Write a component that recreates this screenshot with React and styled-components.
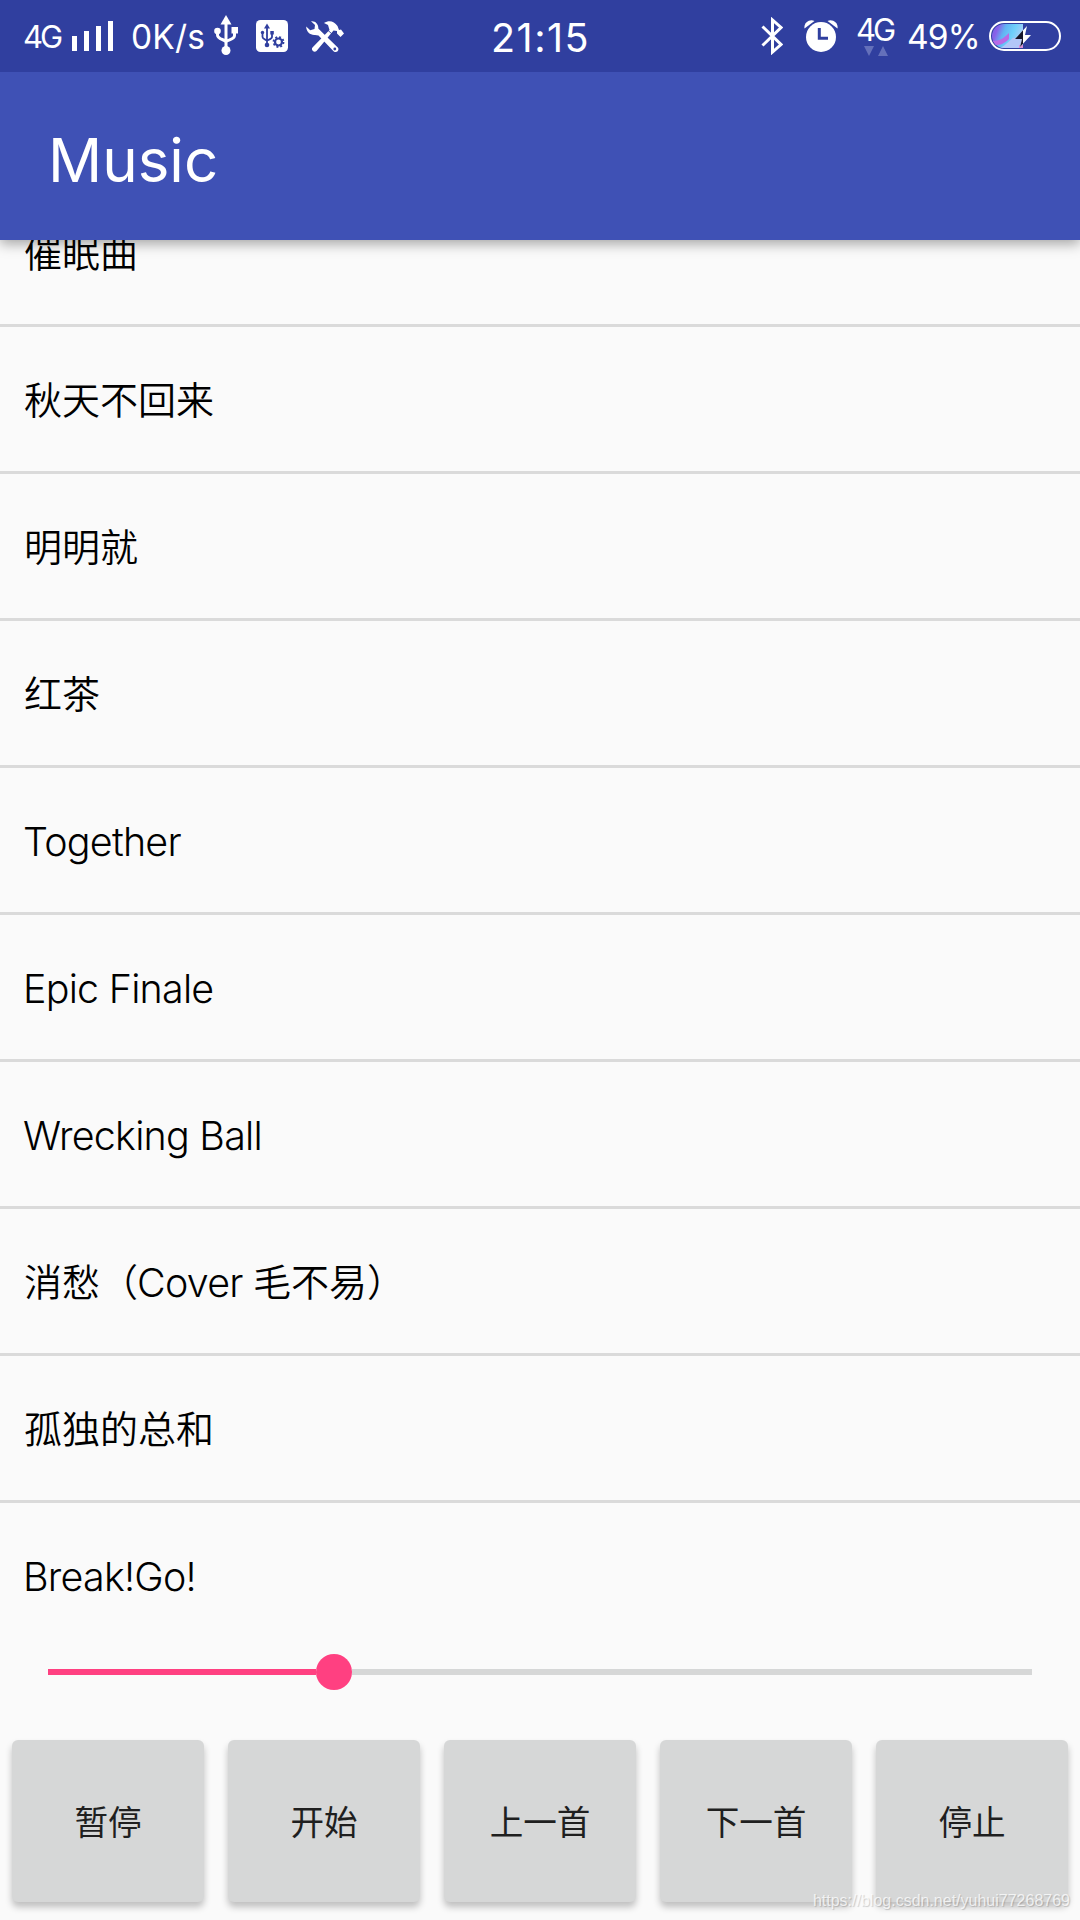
import React from 'react';
import styled, { createGlobalStyle } from 'styled-components';

const songs = [
  '催眠曲',
  '秋天不回来',
  '明明就',
  '红茶',
  'Together',
  'Epic Finale',
  'Wrecking Ball',
  '消愁（Cover 毛不易）',
  '孤独的总和',
  'Break!Go!',
];

const controls = ['暂停', '开始', '上一首', '下一首', '停止'];

const isLatin = (text) => /^[\x20-\x7e]+$/.test(text);

const SignalIcon = () => (
  <svg width="42" height="30" viewBox="0 0 42 30" fill="#fff">
    <path d="M0 15h5v15H0zM12 10h5v20h-5zM24 5h5v25h-5zM36 0h5v30h-5z" />
  </svg>
);

const UsbIcon = () => (
  <svg width="24" height="40" viewBox="0 0 24 40" fill="#fff">
    <path d="M12 0l5.5 9.5h-11z" />
    <circle cx="12" cy="35.5" r="4.5" />
    <circle cx="3.5" cy="16" r="3.3" />
    <path d="M17.5 12H24v6.5h-6.5z" />
    <path
      d="M12 8v25M3.5 16v4c0 5 8.5 4 8.5 7.5M20.5 17v3.5c0 4.5-8.5 4-8.5 7"
      fill="none"
      stroke="#fff"
      strokeWidth="3"
    />
  </svg>
);

const UsbSettingIcon = () => (
  <svg width="32" height="32" viewBox="0 0 32 32">
    <rect width="32" height="32" rx="4.5" fill="#fff" />
    <g fill="#303f9f" stroke="#303f9f">
      <path d="M11 3.5l3 5H8z" stroke="none" />
      <circle cx="11" cy="25" r="2.3" stroke="none" />
      <circle cx="6.5" cy="12.5" r="1.7" stroke="none" />
      <path d="M14.3 11h3.5v3.5h-3.5z" stroke="none" />
      <path
        d="M11 7v17M6.5 13v4c0 2.5 4.5 2.5 4.5 4M16 14v3c0 2.5-5 2.5-5 4"
        fill="none"
        strokeWidth="1.8"
      />
      <circle cx="22.5" cy="22" r="3.5" fill="none" strokeWidth="2.2" />
      <circle
        cx="22.5"
        cy="22"
        r="5"
        fill="none"
        strokeWidth="1.8"
        strokeDasharray="1.96 1.967"
      />
    </g>
  </svg>
);

const ToolsIcon = () => (
  <svg width="38" height="32" viewBox="0 0 38 32" fill="#fff">
    <path d="M5 0.3C9-0.5 12.7 3 12.3 7.5l3.5 3.5 16 15.5c2 2.5-1 6-4 4L12.5 14.5 9 14C4.5 14.5 0 11 0.2 5.5l4 3.7 4.3-1.2 0.5-4z" />
    <path d="M18 2c5-3 10-2 13.5 3l1.5 4 2-0.5 3 4-3.5 3.5-3.5-3.5v-2.5l-3.5-0.5L10.5 30c-2.5 2-6-1-4-3.5L23.5 9l-1.5-5z" />
    <path d="M20.5 8l5.5 5" stroke="#303f9f" strokeWidth="0.9" />
    <circle cx="28.8" cy="28" r="1.4" fill="#303f9f" />
  </svg>
);

const BluetoothIcon = () => (
  <svg width="22" height="38" viewBox="0 0 22 38">
    <path
      d="M1.5 9.5L20 27.5 11.5 35V3L20 10.5 1.5 28.5"
      fill="none"
      stroke="#fff"
      strokeWidth="3"
    />
  </svg>
);

const AlarmIcon = () => (
  <svg width="34" height="32" viewBox="0 0 34 32">
    <g fill="#fff">
      <circle cx="17" cy="17" r="15" />
      <path d="M0.5 8.5C-0.5 3 5.5-1.5 10.5 1z" />
      <path d="M33.5 8.5C34.5 3 28.5-1.5 23.5 1z" />
    </g>
    <path d="M15.3 8v10.3H24" fill="none" stroke="#303f9f" strokeWidth="3" />
  </svg>
);

const BatteryIcon = () => (
  <svg width="72" height="30" viewBox="0 0 72 30">
    <defs>
      <linearGradient id="charge" x1="0" y1="0" x2="1" y2="0.35">
        <stop offset="0" stopColor="#5a6be0" />
        <stop offset="0.3" stopColor="#8a5fe8" />
        <stop offset="0.5" stopColor="#62b4f3" />
        <stop offset="0.75" stopColor="#6fd0fa" />
        <stop offset="1" stopColor="#a9cdf8" />
      </linearGradient>
      <clipPath id="filled">
        <path d="M34 3H15a12 12 0 0 0 0 24h19z" />
      </clipPath>
    </defs>
    <g clipPath="url(#filled)">
      <path d="M0 0h34v30H0z" fill="url(#charge)" />
      <path d="M3 20c8 0 12-3 17-8v6c-5 5-9 6-14 6z" fill="#b96be6" />
      <path d="M10 27c5-1 10-7 14-10h10v10z" fill="#b3c6f8" />
      <path d="M30 24h4v4h-4z" fill="#d78fd8" />
    </g>
    <rect
      x="1"
      y="1"
      width="70"
      height="28"
      rx="14"
      fill="none"
      stroke="#fff"
      strokeWidth="2"
    />
    <path d="M38 5L26 18h7l-2 8 11-12h-6z" fill="#fff" />
    <path d="M38 5L26 18h7l-2 8 11-12h-6z" fill="#17172b" clipPath="url(#filled)" />
  </svg>
);

const App = () => {
  return (
    <Screen>
      <GlobalStyle />
      <StatusBar>
        <StatusGroup>
          <StatusText $size={31} $left={23} $width={49} $space={-3} $shift={0}>
            4G
          </StatusText>
          <StatusIcon $top={21}>
            <SignalIcon />
          </StatusIcon>
          <StatusText $size={33.5} $left={17} $width={83} $space={0.2} $shift={1}>
            0K/s
          </StatusText>
          <StatusIcon $top={15}>
            <UsbIcon />
          </StatusIcon>
          <StatusIcon $top={20} $left={18}>
            <UsbSettingIcon />
          </StatusIcon>
          <StatusIcon $top={21} $left={18}>
            <ToolsIcon />
          </StatusIcon>
        </StatusGroup>
        <Clock>21:15</Clock>
        <StatusGroup>
          <StatusIcon $top={17}>
            <BluetoothIcon />
          </StatusIcon>
          <StatusIcon $top={20} $left={21}>
            <AlarmIcon />
          </StatusIcon>
          <Network>
            <span>4G</span>
            <svg width="24" height="10" viewBox="0 0 24 10" fill="#6470ba">
              <path d="M0 0h10L5 10zM14 10h10L19 0z" />
            </svg>
          </Network>
          <StatusText $size={33.5} $left={14} $width={82} $space={-0.8} $shift={1}>
            49%
          </StatusText>
          <StatusIcon $top={21}>
            <BatteryIcon />
          </StatusIcon>
        </StatusGroup>
      </StatusBar>
      <AppBar>
        <h1>Music</h1>
      </AppBar>
      <SongList>
        {songs.map((song) => (
          <Song key={song}>
            {song
              .split(/([\x20-\x7e]+)/)
              .filter(Boolean)
              .map((part) =>
                isLatin(part) ? <Latin key={part}>{part}</Latin> : part
              )}
          </Song>
        ))}
      </SongList>
      <SeekBar>
        <Played />
        <Thumb />
        <Remaining />
      </SeekBar>
      <Controls>
        {controls.map((label) => (
          <ControlButton key={label}>{label}</ControlButton>
        ))}
      </Controls>
      <Watermark>https://blog.csdn.net/yuhui77268769</Watermark>
    </Screen>
  );
};

export default App;

const GlobalStyle = createGlobalStyle`
  * {
    box-sizing: border-box;
  }

  body {
    margin: 0;
    background: #fafafa;
    font-family: Inter, 'Noto Sans CJK SC', sans-serif;
  }
`;

const Screen = styled.div`
  position: relative;
  width: 1080px;
  height: 1920px;
  display: flex;
  flex-direction: column;
  overflow: hidden;
  background: #fafafa;
`;

const StatusBar = styled.header`
  position: relative;
  z-index: 2;
  flex: none;
  height: 72px;
  display: grid;
  grid-template-columns: 491px 1fr 319px;
  background: #303f9f;
  color: #fff;
`;

const StatusGroup = styled.div`
  display: flex;
  align-items: flex-start;
`;

const StatusText = styled.span`
  flex: none;
  width: ${({ $width }) => $width}px;
  margin-left: ${({ $left }) => $left}px;
  padding-top: ${({ $shift }) => $shift}px;
  font-size: ${({ $size }) => $size}px;
  line-height: 73px;
  letter-spacing: ${({ $space }) => $space}px;
  white-space: nowrap;
`;

const StatusIcon = styled.span`
  flex: none;
  margin-top: ${({ $top }) => $top}px;
  margin-left: ${({ $left }) => $left || 0}px;

  svg {
    display: block;
  }
`;

const Clock = styled.span`
  font-size: 39.5px;
  line-height: 76px;
  letter-spacing: 1.5px;
`;

const Network = styled.span`
  width: 36px;
  margin-left: 18px;
  margin-right: 1px;
  display: flex;
  flex-direction: column;
  padding-top: 14px;

  span {
    font-size: 31px;
    line-height: 32px;
    letter-spacing: -3px;
  }

  svg {
    margin-left: 8px;
  }
`;

const AppBar = styled.div`
  position: relative;
  z-index: 1;
  flex: none;
  height: 168px;
  padding-left: 48px;
  display: flex;
  align-items: center;
  background: #3f51b5;
  color: #fff;
  box-shadow: 0 4px 12px rgba(0, 0, 0, 0.34);

  h1 {
    margin: 7px 0 0;
    font-size: 60px;
    font-weight: 400;
  }
`;

const SongList = styled.ul`
  flex: none;
  height: 1405px;
  margin: 0;
  padding: 0;
  display: flex;
  flex-direction: column;
  justify-content: flex-end;
  overflow: hidden;
  list-style: none;
`;

const Song = styled.li`
  flex: none;
  height: 147px;
  padding: 2px 24px 0;
  display: flex;
  align-items: baseline;
  border-bottom: 3px solid #dadada;
  color: #000;
  font-size: 38px;
  font-weight: 350;
  line-height: 142px;
  white-space: pre;

  &:last-child {
    height: 142px;
    border-bottom: 0;
  }
`;

const Latin = styled.span`
  position: relative;
  top: 1px;
  font-size: 39.4px;
  font-weight: 300;
  letter-spacing: -0.75px;

  /* side bearing of the first letter */
  &:first-child:last-child {
    margin-left: -1px;
  }
`;

const SeekBar = styled.div`
  flex: none;
  height: 54px;
  padding: 0 48px;
  display: flex;
  align-items: center;
`;

const Played = styled.div`
  width: 268px;
  height: 6px;
  background: #ff4081;
`;

const Thumb = styled.div`
  width: 36px;
  height: 36px;
  border-radius: 50%;
  background: #ff4081;
`;

const Remaining = styled.div`
  flex: 1;
  height: 6px;
  background: #d6d7d7;
`;

const Controls = styled.div`
  flex: 1;
  padding: 41px 12px 18px;
  display: grid;
  grid-template-columns: repeat(5, 1fr);
  gap: 24px;
`;

const ControlButton = styled.button`
  padding: 0 0 2px;
  border: 0;
  border-radius: 6px;
  background: #d6d7d7;
  color: #1f1f1f;
  font-family: inherit;
  font-size: 33.6px;
  box-shadow: 0 5px 7px rgba(0, 0, 0, 0.24);
`;

const Watermark = styled.span`
  position: absolute;
  right: 10px;
  bottom: 10px;
  color: rgba(255, 255, 255, 0.75);
  font-family: 'Liberation Sans', sans-serif;
  font-size: 16px;
  line-height: 18px;
  text-shadow: 1px 1px 1px rgba(0, 0, 0, 0.18);
`;
